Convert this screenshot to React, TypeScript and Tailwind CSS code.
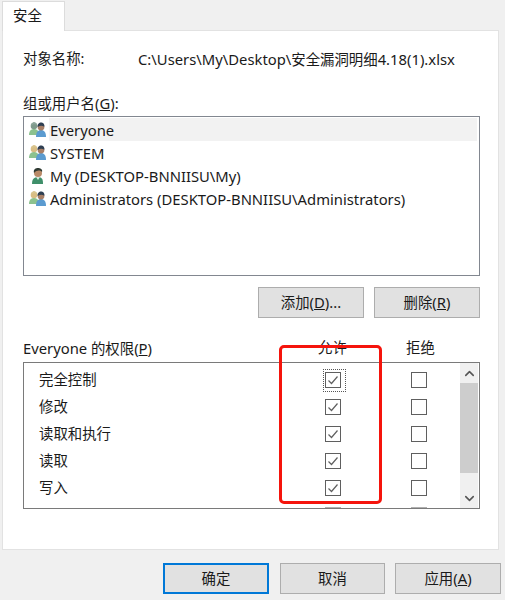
import { ChevronDown, ChevronUp } from 'lucide-react';

const users = [
  { name: 'Everyone', kind: 'everyone' },
  { name: 'SYSTEM', kind: 'group' },
  { name: 'My (DESKTOP-BNNIISU\\My)', kind: 'user' },
  { name: 'Administrators (DESKTOP-BNNIISU\\Administrators)', kind: 'group' },
];

const perms = ['完全控制', '修改', '读取和执行', '读取', '写入'];

function UserIcon({ kind }: { kind: string }) {
  if (kind === 'user') {
    return (
      <svg width="18" height="18" viewBox="0 0 18 18" className="shrink-0">
        <path d="M3 17c0-5 2-7 6-7s5 2 5 7z" fill="#3f8f6a" />
        <path d="M7 10l2 3 2-3z" fill="#d9e8dc" />
        <circle cx="9" cy="6" r="4" fill="#b98a68" />
        <path d="M5 6c-1-4 2-5 4-5s5 1 4 4c-2-2-5-2-8 1z" fill="#2f3a33" />
      </svg>
    );
  }
  const left = kind === 'everyone' ? '#8da69a' : '#d8c48e';
  const leftHead = kind === 'everyone' ? '#7f9a8c' : '#d9bd83';
  return (
    <svg width="18" height="18" viewBox="0 0 18 18" className="shrink-0">
      <path d="M0 14c0-4 2-6 5-6s5 2 5 6z" fill="#8cc28f" />
      <circle cx="5" cy="5" r="3.3" fill={leftHead} />
      <path d="M2 5c0-3 2-4 3-4s3 1 3 3c-2-1-4-1-6 1z" fill={left} />
      <path d="M7 16c0-5 2-7 5-7s5 2 5 7z" fill="#5b9bd0" />
      <circle cx="12" cy="6" r="3.4" fill="#a87f66" />
      <path d="M8.7 6c-.6-3 1.500-4.500 3.300-4.500s4 1.500 3.300 4.300c-2-1.500-4.300-1.500-6.600.2z" fill="#2f3f52" />
    </svg>
  );
}

function Check({ checked, focused }: { checked?: boolean; focused?: boolean }) {
  return (
    <div className={`flex h-[23px] w-[23px] items-center justify-start border border-dotted pl-[1px] ${focused ? 'border-[#555555]' : 'border-transparent'}`}>
      <div className="flex h-[16px] w-[16px] items-center justify-center border border-[#5f5f5f] bg-white">
        {checked && (
          <svg width="12" height="12" viewBox="0 0 12 12">
            <path d="M1.500 6.500l3 3 6-7" fill="none" stroke="#606060" strokeWidth="1.200" />
          </svg>
        )}
      </div>
    </div>
  );
}

function Latin({ children, u }: { children: React.ReactNode; u?: boolean }) {
  return <span className={`text-[14.8px] ${u ? 'underline' : ''}`}>{children}</span>;
}

function Button({ children, className = 'w-[106px] border border-[#adadad]' }: { children: React.ReactNode; className?: string }) {
  return (
    <button className={`flex h-[31px] items-center justify-center bg-[#e1e1e1] text-[14.4px] text-[#1a1a1a] ${className}`}>
      {children}
    </button>
  );
}

export default function App() {
  return (
    <div className="flex h-[600px] w-[505px] flex-col overflow-hidden bg-[#f0f0f0] pl-[2px] font-['Noto_Sans','Noto_Sans_CJK_SC',sans-serif] text-[14.4px] leading-[20px] text-[#1a1a1a]">
      <div className="relative z-10 -mb-[1px] mt-[1px] flex h-[30px] w-[63px] items-center border border-b-0 border-[#dcdcdc] bg-white pb-[2px] pl-[10px]">
        安全
      </div>
      <div className="flex h-[520px] w-[497px] flex-col border border-[#e2e2e2] bg-white px-[20px]">
        <div className="mt-[18px] flex h-[20px]">
          <span className="w-[115px]">对象名称:</span>
          <span className="whitespace-nowrap">
            <Latin>C:\Users\My\Desktop\</Latin>安全漏洞明细<Latin>4.18(1).xlsx</Latin>
          </span>
        </div>
        <div className="mt-[24px] h-[20px]">
          组或用户名<Latin>(</Latin><Latin u>G</Latin><Latin>):</Latin>
        </div>
        <div className="mt-[3px] flex h-[160px] w-[457px] flex-col border border-[#828790] pl-[5px] pt-[1px]">
          {users.map((u, i) => (
            <div key={u.name} className="flex h-[23px] items-center gap-[2px] whitespace-nowrap">
              <UserIcon kind={u.kind} />
              <span className={`flex h-[23px] items-center pl-[1px] text-[14.8px] ${i === 0 ? 'w-[428px] bg-[#f2f2f2]' : ''}`}>{u.name}</span>
            </div>
          ))}
        </div>
        <div className="mt-[11px] flex w-[457px] justify-end gap-[10px]">
          <Button>
            <span>添加<Latin>(</Latin><Latin u>D</Latin><Latin>)...</Latin></span>
          </Button>
          <Button>
            <span>删除<Latin>(</Latin><Latin u>R</Latin><Latin>)</Latin></span>
          </Button>
        </div>
        <div className="mt-[19px] flex h-[25px] w-[457px] items-center pb-[3px]">
          <span className="w-[266px]"><Latin>Everyone</Latin> 的权限<Latin>(</Latin><Latin u>P</Latin><Latin>)</Latin></span>
          <span className="w-[117px] pl-[29px]">允许</span>
          <span>拒绝</span>
        </div>
        <div className="flex h-[147px] w-[457px] overflow-hidden border border-[#7a7a7a]">
          <div className="relative flex-1 overflow-hidden pt-[4px]">
            {perms.map((p, i) => (
              <div key={p} className="flex h-[26.800px] items-center">
                <span className="w-[299px] pl-[15px]">{p}</span>
                <div className="w-[86px]">
                  <Check checked focused={i === 0} />
                </div>
                <Check />
              </div>
            ))}
            <div className="flex h-[26.800px] items-start pt-[6px]">
              <div className="ml-[301px] h-[16px] w-[16px] border border-[#b0b0b0]" />
              <div className="ml-[70px] h-[16px] w-[16px] border border-[#b0b0b0]" />
            </div>
          </div>
          <div className="mr-[1px] flex w-[18px] flex-col bg-[#f0f0f0]">
            <div className="flex h-[20px] items-center justify-center">
              <ChevronUp size={15} strokeWidth={2.500} color="#555555" />
            </div>
            <div className="h-[90px] bg-[#cdcdcd]" />
            <div className="flex-1" />
            <div className="flex h-[20px] items-center justify-center">
              <ChevronDown size={15} strokeWidth={2.500} color="#555555" />
            </div>
          </div>
        </div>
      </div>
      <div className="mt-[13px] flex pl-[161px]">
        <Button className="w-[106px] border-2 border-[#0078d7]">确定</Button>
        <Button className="ml-[11px] w-[105px] border border-[#adadad]">取消</Button>
        <Button className="ml-[10px] w-[106px] border border-[#adadad]">
          <span>应用<Latin>(</Latin><Latin u>A</Latin><Latin>)</Latin></span>
        </Button>
      </div>
      {/* red annotation drawn over the dialog */}
      <div className="absolute left-[279px] top-[345px] h-[159px] w-[103px] rounded-[5px] border-[3.500px] border-[#f5140c]" />
    </div>
  );
}
